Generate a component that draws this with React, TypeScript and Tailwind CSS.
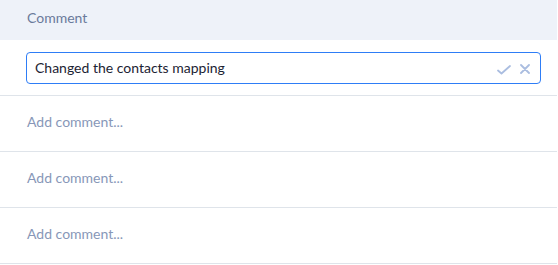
const rows = ["Add comment...", "Add comment...", "Add comment..."];

export default function App() {
  return (
    <div className="w-[557px] bg-white font-['Lato',sans-serif] text-sm">
      {/* Header */}
      <div className="h-10 flex items-center pl-[27px] pb-1 bg-[#eef2f9] text-[#6a7a9b]">
        Comment
      </div>

      {/* Editing row */}
      <div className="h-14 flex items-center pl-[26px] pr-4 border-b border-[#dfe4ea]">
        <div className="flex-1 h-[32px] flex items-center pl-2 pr-[10px] rounded-[4px] border border-[#2e7df6]">
          <span className="flex-1 text-[#1c2333]">Changed the contacts mapping</span>
          <svg width="14" height="10" viewBox="0 0 14 10" fill="none" className="mt-1">
            <path d="M1 5.5 L4.5 8.5 L13 1" stroke="#aabde0" strokeWidth="1.8" strokeLinecap="round" strokeLinejoin="round" />
          </svg>
          <svg width="10" height="10" viewBox="0 0 10 10" fill="none" className="ml-[9px] mt-0.5">
            <path d="M1 1 L9 9 M9 1 L1 9" stroke="#aabde0" strokeWidth="1.8" strokeLinecap="round" />
          </svg>
        </div>
      </div>

      {rows.map((r, i) => (
        <div
          key={i}
          className="h-14 flex items-center pl-[27px] pb-1 border-b border-[#dfe4ea] text-[#8797b8]"
        >
          {r}
        </div>
      ))}
    </div>
  );
}
